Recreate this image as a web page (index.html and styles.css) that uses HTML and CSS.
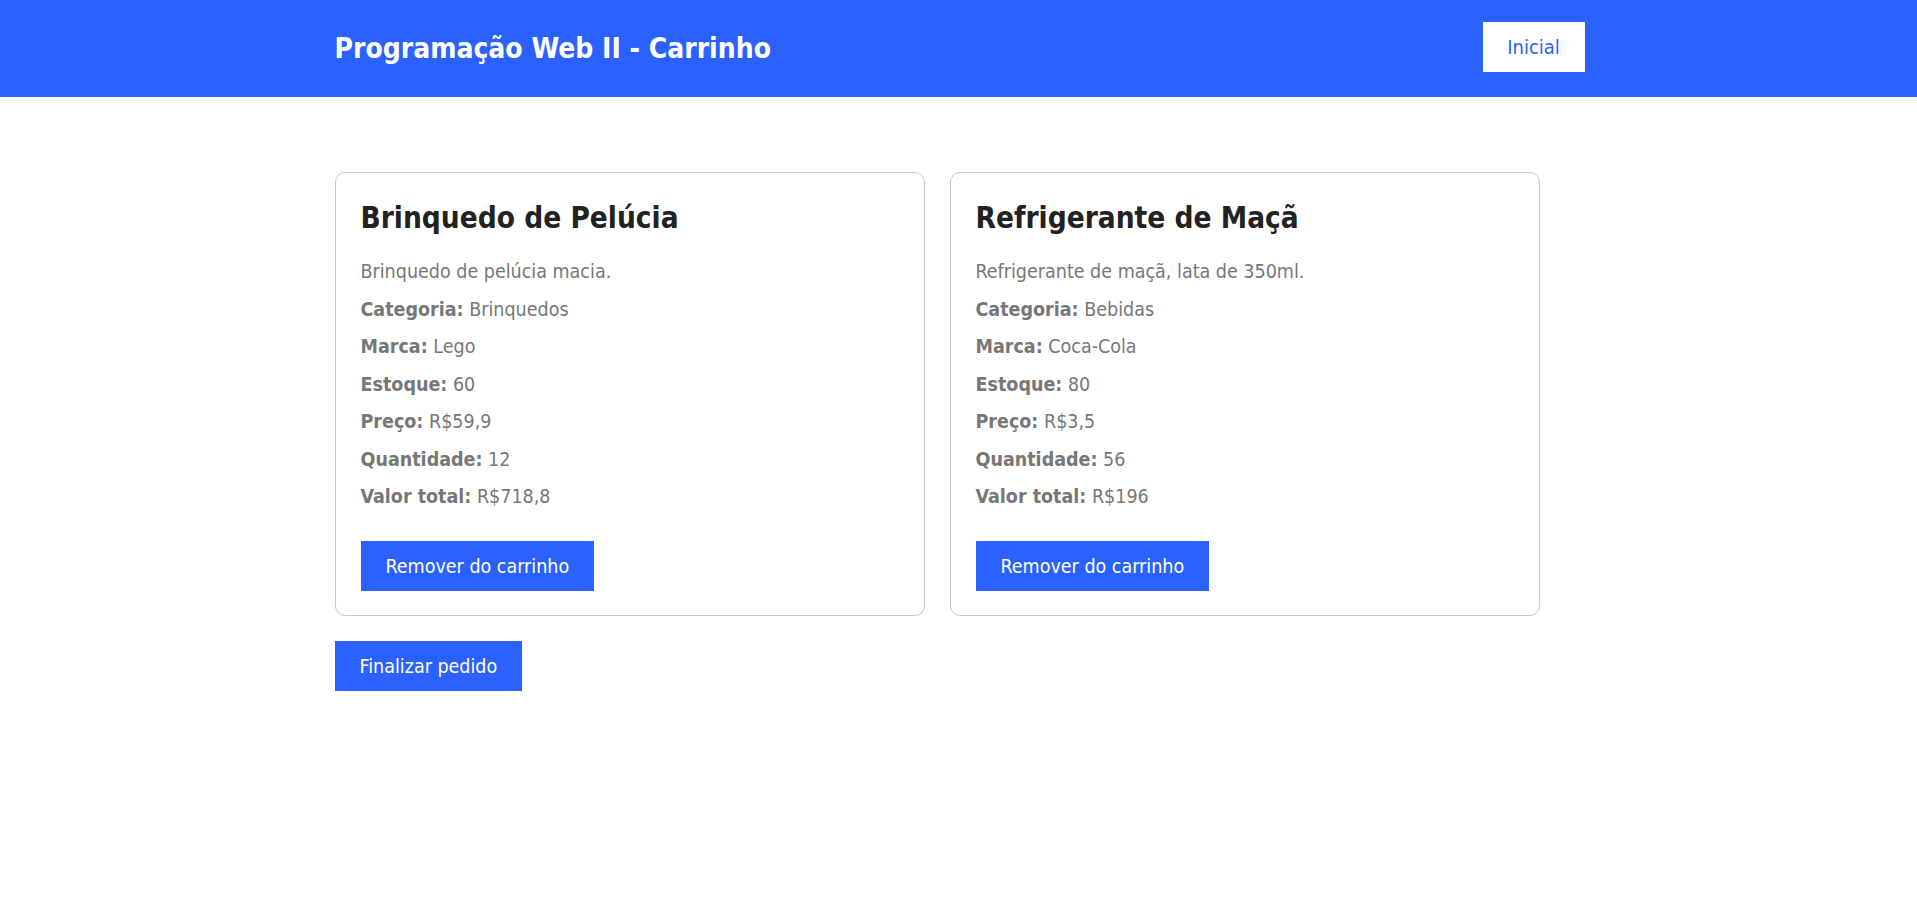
FILE: index.html
```html
<!DOCTYPE html>
<html lang="pt-BR">
<head>
<meta charset="utf-8">
<title>Programação Web II - Carrinho</title>
<link rel="stylesheet" href="styles.css">
</head>
<body>
<header class="topbar">
  <div class="topbar-inner">
    <h1 class="brand">Programação Web II - Carrinho</h1>
    <a class="nav-btn" href="#">Inicial</a>
  </div>
</header>
<main class="content">
  <div class="cards">
    <section class="card">
      <h2 class="card-title">Brinquedo de Pelúcia</h2>
      <div class="card-info">
        <p>Brinquedo de pelúcia macia.</p>
        <p><strong>Categoria:</strong> Brinquedos</p>
        <p><strong>Marca:</strong> Lego</p>
        <p><strong>Estoque:</strong> 60</p>
        <p><strong>Preço:</strong> R$59,9</p>
        <p><strong>Quantidade:</strong> 12</p>
        <p><strong>Valor total:</strong> R$718,8</p>
      </div>
      <button class="btn" type="button">Remover do carrinho</button>
    </section>
    <section class="card">
      <h2 class="card-title">Refrigerante de Maçã</h2>
      <div class="card-info">
        <p>Refrigerante de maçã, lata de 350ml.</p>
        <p><strong>Categoria:</strong> Bebidas</p>
        <p><strong>Marca:</strong> Coca-Cola</p>
        <p><strong>Estoque:</strong> 80</p>
        <p><strong>Preço:</strong> R$3,5</p>
        <p><strong>Quantidade:</strong> 56</p>
        <p><strong>Valor total:</strong> R$196</p>
      </div>
      <button class="btn" type="button">Remover do carrinho</button>
    </section>
  </div>
  <button class="btn btn-finish" type="button">Finalizar pedido</button>
</main>
</body>
</html>
```
FILE: styles.css
```css
* { box-sizing: border-box; }

body {
  margin: 0;
  background: #fff;
  font-family: "DejaVu Sans Condensed", "DejaVu Sans", sans-serif;
  color: #777;
}

.topbar {
  background: #2b62ff;
  height: 97px;
  display: flex;
  align-items: center;
}

.topbar-inner {
  width: 1252px;
  margin: 0 auto;
  padding-left: 2px;
  display: flex;
  align-items: center;
  justify-content: space-between;
}

.brand {
  margin: 0;
  color: #fff;
  font-size: 28px;
  font-weight: bold;
  line-height: 34px;
}

.nav-btn {
  display: flex;
  align-items: center;
  justify-content: center;
  width: 102px;
  height: 50px;
  margin-bottom: 3px;
  background: #fff;
  color: #2b62ff;
  text-decoration: none;
  font-size: 20px;
}

.content {
  width: 1252px;
  margin: 0 auto;
  padding-left: 2px;
  padding-top: 75px;
}

.cards {
  display: grid;
  grid-template-columns: repeat(2, 590px);
  column-gap: 25px;
}

.card {
  border: 1px solid #c8c8c8;
  border-radius: 10px;
  padding: 27px 25px 24px;
}

.card-title {
  margin: 0 0 24px;
  color: #222;
  font-size: 29.5px;
  line-height: 36px;
  font-weight: bold;
}

.card-info {
  display: flex;
  flex-direction: column;
  gap: 13.5px;
  margin-bottom: 32px;
}

.card-info p {
  margin: 0;
  font-size: 19.5px;
  line-height: 24px;
}

.btn {
  display: block;
  height: 50px;
  padding: 0 25px;
  border: 0;
  border-radius: 0;
  background: #2b62ff;
  color: #fff;
  font-family: inherit;
  font-size: 19.5px;
  cursor: pointer;
}

.btn-finish {
  margin-top: 25px;
}
```
